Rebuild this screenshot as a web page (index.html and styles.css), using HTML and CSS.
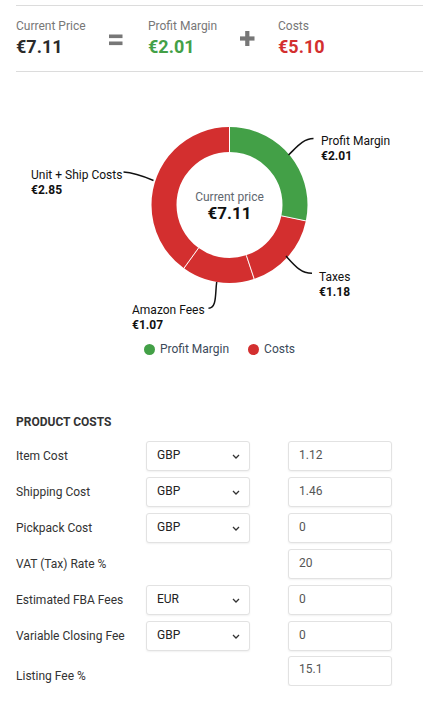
FILE: index.html
```html
<!DOCTYPE html>
<html>
<head>
<meta charset="utf-8">
<link rel="stylesheet" href="styles.css">
</head>
<body>
<div class="summary">
  <div class="metric">
    <div class="metric-label">Current Price</div>
    <div class="metric-value">€7.11</div>
  </div>
  <div class="sign">
    <svg width="14" height="12" viewBox="0 0 14 12"><rect x="0" y="0.5" width="13.5" height="3.6" fill="#777"/><rect x="0" y="7.5" width="13.5" height="3.6" fill="#777"/></svg>
  </div>
  <div class="metric">
    <div class="metric-label">Profit Margin</div>
    <div class="metric-value green">€2.01</div>
  </div>
  <div class="sign plus">
    <svg width="15" height="15" viewBox="0 0 15 15"><rect x="5.2" y="0" width="4.2" height="15" fill="#777"/><rect x="0" y="5.4" width="14.5" height="4.2" fill="#777"/></svg>
  </div>
  <div class="metric">
    <div class="metric-label">Costs</div>
    <div class="metric-value red">€5.10</div>
  </div>
</div>

<svg class="chart" width="440" height="268" viewBox="0 0 440 268">
  <g transform="rotate(-90 229.5 133)" fill="none" stroke-width="25">
    <circle cx="229.5" cy="133" r="65.5" stroke="#43a047" stroke-dasharray="116.35 411.55" stroke-dashoffset="0"/>
    <circle cx="229.5" cy="133" r="65.5" stroke="#d32f2f" stroke-dasharray="68.31 411.55" stroke-dashoffset="-116.35"/>
    <circle cx="229.5" cy="133" r="65.5" stroke="#d32f2f" stroke-dasharray="61.94 411.55" stroke-dashoffset="-184.66"/>
    <circle cx="229.5" cy="133" r="65.5" stroke="#d32f2f" stroke-dasharray="164.96 411.55" stroke-dashoffset="-246.60"/>
  </g>
  <g stroke="#fff" stroke-width="1">
    <line x1="229.5" y1="80.5" x2="229.5" y2="54"/>
    <line x1="281.4" y1="143.8" x2="306.8" y2="149.1"/>
    <line x1="246.3" y1="183.3" x2="254.5" y2="207.9"/>
    <line x1="198.6" y1="176" x2="183.4" y2="197.1"/>
  </g>
  <g fill="none" stroke="#111" stroke-width="1.5">
    <path d="M288.5 83 C296 76 303 66.5 313.5 66.5"/>
    <path d="M123.5 100 C133 100.5 143 104 153.5 108.5"/>
    <path d="M286 184 C295 194 301 201.3 312 201.3"/>
    <path d="M216.7 210 C215 222 217 236 208.5 236.3"/>
  </g>
  <g class="lbl">
    <text x="321" y="73">Profit Margin</text>
    <text x="321" y="87.5" class="lbl-v">€2.01</text>
    <text x="31" y="107">Unit + Ship Costs</text>
    <text x="31" y="121.5" class="lbl-v">€2.85</text>
    <text x="319" y="208.7">Taxes</text>
    <text x="319" y="223.5" class="lbl-v">€1.18</text>
    <text x="132" y="242.3">Amazon Fees</text>
    <text x="132" y="257.3" class="lbl-v">€1.07</text>
  </g>
  <text x="229.5" y="129" text-anchor="middle" class="center-l">Current price</text>
  <text x="229.5" y="146.5" text-anchor="middle" class="center-v">€7.11</text>
</svg>

<div class="legend">
  <div class="legend-item"><span class="dot dot-green"></span>Profit Margin</div>
  <div class="legend-item"><span class="dot dot-red"></span>Costs</div>
</div>

<div class="costs">
  <div class="costs-title">PRODUCT COSTS</div>
  <div class="rows">
    <div class="row">
      <div class="row-label">Item Cost</div>
      <div class="select"><span>GBP</span><svg class="chev" width="8" height="5" viewBox="0 0 8 5"><path d="M1 1 L4 4 L7 1" fill="none" stroke="#333" stroke-width="1.3"/></svg></div>
      <div class="input">1.12</div>
    </div>
    <div class="row">
      <div class="row-label">Shipping Cost</div>
      <div class="select"><span>GBP</span><svg class="chev" width="8" height="5" viewBox="0 0 8 5"><path d="M1 1 L4 4 L7 1" fill="none" stroke="#333" stroke-width="1.3"/></svg></div>
      <div class="input">1.46</div>
    </div>
    <div class="row">
      <div class="row-label">Pickpack Cost</div>
      <div class="select"><span>GBP</span><svg class="chev" width="8" height="5" viewBox="0 0 8 5"><path d="M1 1 L4 4 L7 1" fill="none" stroke="#333" stroke-width="1.3"/></svg></div>
      <div class="input">0</div>
    </div>
    <div class="row">
      <div class="row-label">VAT (Tax) Rate %</div>
      <div class="empty"></div>
      <div class="input">20</div>
    </div>
    <div class="row">
      <div class="row-label">Estimated FBA Fees</div>
      <div class="select"><span>EUR</span><svg class="chev" width="8" height="5" viewBox="0 0 8 5"><path d="M1 1 L4 4 L7 1" fill="none" stroke="#333" stroke-width="1.3"/></svg></div>
      <div class="input">0</div>
    </div>
    <div class="row">
      <div class="row-label">Variable Closing Fee</div>
      <div class="select"><span>GBP</span><svg class="chev" width="8" height="5" viewBox="0 0 8 5"><path d="M1 1 L4 4 L7 1" fill="none" stroke="#333" stroke-width="1.3"/></svg></div>
      <div class="input">0</div>
    </div>
    <div class="row row-last">
      <div class="row-label low">Listing Fee %</div>
      <div class="empty"></div>
      <div class="input">15.1</div>
    </div>
  </div>
</div>
</body>
</html>
```
FILE: styles.css
```css
* { box-sizing: border-box; }
html, body { margin: 0; padding: 0; background: #fff; }
body {
  font-family: Roboto, "Liberation Sans", Arial, sans-serif;
  color: #333;
  width: 440px;
}
.summary {
  margin: 5px 17px 0 16px;
  border-top: 1px solid #dcdcdc;
  border-bottom: 1px solid #dcdcdc;
  padding: 13px 0 13px;
  display: grid;
  grid-template-columns: 92px 40px 92px 38px auto;
  align-items: start;
}
.metric-label {
  font-size: 12px;
  line-height: 14px;
  color: #777;
}
.metric-value {
  margin-top: 3px;
  font-size: 18px;
  line-height: 22px;
  font-weight: 700;
  color: #2a2a2a;
}
.green { color: #43a047; }
.red { color: #d32f2f; }
.sign { padding-top: 15px; padding-left: 1px; }
.sign svg { display: block; }
.sign.plus { padding-top: 12px; padding-left: 0; }
.chart { display: block; }
.lbl text { font-size: 12px; fill: #111; }
.lbl .lbl-v { font-weight: 700; }
.center-l { font-size: 12px; fill: #5f6770; }
.center-v { font-size: 17px; font-weight: 700; fill: #111; }
.legend {
  display: flex;
  justify-content: center;
  gap: 19px;
  height: 18px;
  align-items: center;
  font-size: 12px;
  color: #3c4a5a;
  padding-right: 1px;
}
.legend-item { display: flex; align-items: center; gap: 5px; }
.dot { width: 11px; height: 11px; border-radius: 50%; display: inline-block; }
.dot-green { background: #43a047; }
.dot-red { background: #d32f2f; }
.costs { padding: 0 16px; margin-top: 57px; }
.costs-title {
  font-size: 12px;
  line-height: 14px;
  font-weight: 700;
  color: #333;
}
.rows {
  margin-top: 12px;
  display: flex;
  flex-direction: column;
  gap: 6px;
}
.row {
  display: grid;
  grid-template-columns: 130px 142px 104px;
  height: 30px;
  align-items: center;
}
.row > .select, .row > .empty { width: 104px; }
.row-last { margin-top: -1.5px; }
.row-label { font-size: 12px; color: #333; }
.row-label.low { padding-top: 10px; }
.select, .input {
  height: 30px;
  border: 1px solid #e2e2e2;
  border-radius: 3px;
  box-shadow: 0 1px 2px rgba(0,0,0,0.06);
  font-size: 12px;
  display: flex;
  align-items: center;
  padding: 0 10px 3px;
  background: #fff;
}
.select { justify-content: space-between; color: #222; padding-right: 9px; }
.select .chev { margin-top: 4px; }
.input { color: #555; }
.empty { height: 30px; }
```
